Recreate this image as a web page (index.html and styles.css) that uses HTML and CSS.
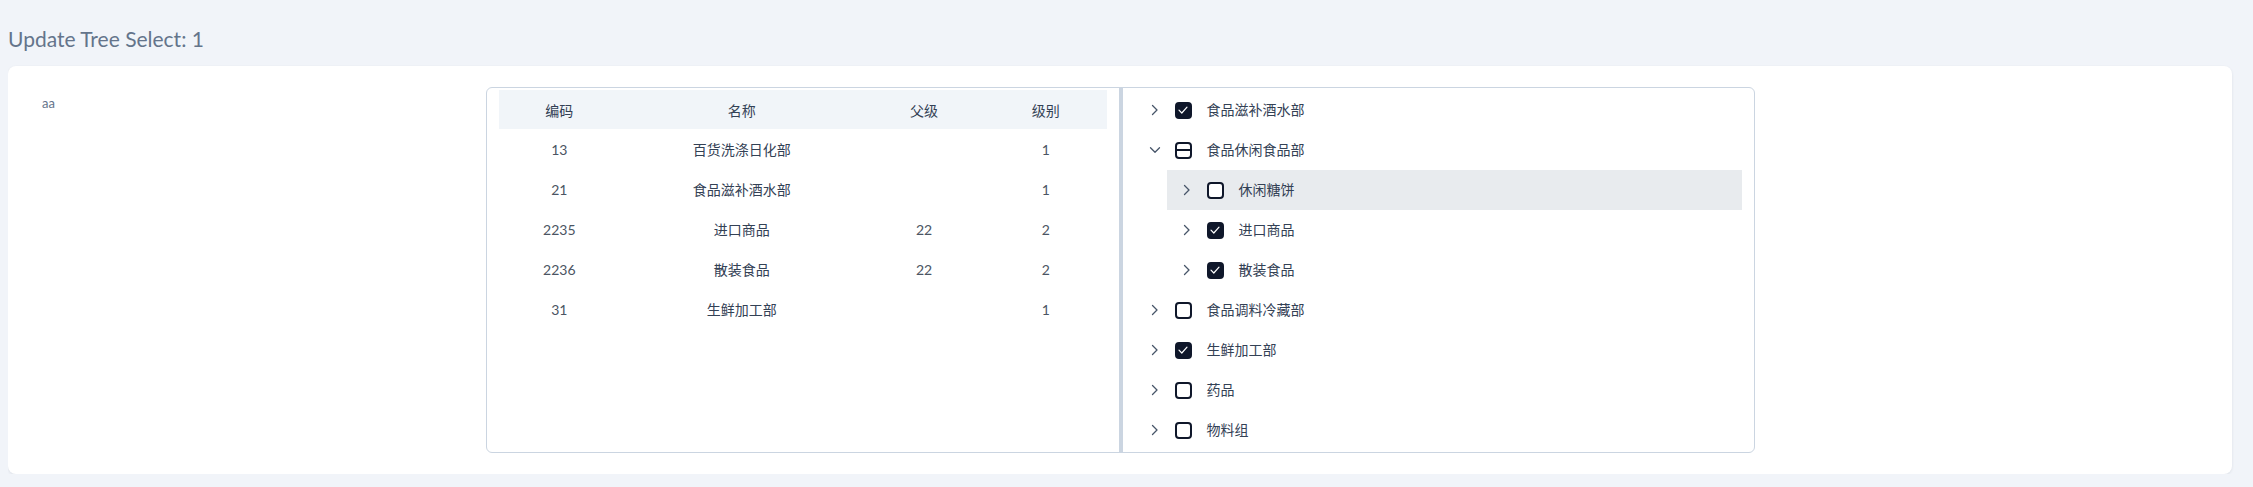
FILE: index.html
```html
<!DOCTYPE html>
<html lang="zh">
<head>
<meta charset="utf-8">
<title>Update Tree Select</title>
<link rel="stylesheet" href="styles.css">
</head>
<body>
<div class="page">
  <div class="title">Update Tree Select: 1</div>
  <div class="card">
    <div class="label">aa</div>
    <div class="box">
      <div class="pane-left">
        <table class="grid">
          <colgroup><col class="c1"><col class="c2"><col class="c3"><col class="c4"></colgroup>
          <thead>
            <tr><th>编码</th><th>名称</th><th>父级</th><th>级别</th></tr>
          </thead>
          <tbody>
            <tr><td>13</td><td class="name">百货洗涤日化部</td><td></td><td>1</td></tr>
            <tr><td>21</td><td class="name">食品滋补酒水部</td><td></td><td>1</td></tr>
            <tr><td>2235</td><td class="name">进口商品</td><td>22</td><td>2</td></tr>
            <tr><td>2236</td><td class="name">散装食品</td><td>22</td><td>2</td></tr>
            <tr><td>31</td><td class="name">生鲜加工部</td><td></td><td>1</td></tr>
          </tbody>
        </table>
      </div>
      <div class="divider"></div>
      <div class="pane-right">
        <div class="node">
          <svg class="chev" viewBox="0 0 16 16"><path d="M5.5 3.5 L10 8 L5.5 12.5"/></svg>
          <span class="cb checked"><svg viewBox="0 0 16 16"><path d="M4 8.2 L6.8 11 L12 5.2"/></svg></span>
          <span class="text">食品滋补酒水部</span>
        </div>
        <div class="node">
          <svg class="chev" viewBox="0 0 16 16"><path d="M3.5 5.8 L8 10.3 L12.5 5.8"/></svg>
          <span class="cb indeterminate"></span>
          <span class="text">食品休闲食品部</span>
        </div>
        <div class="children">
          <div class="node hover">
            <svg class="chev" viewBox="0 0 16 16"><path d="M5.5 3.5 L10 8 L5.5 12.5"/></svg>
            <span class="cb"></span>
            <span class="text">休闲糖饼</span>
          </div>
          <div class="node">
            <svg class="chev" viewBox="0 0 16 16"><path d="M5.5 3.5 L10 8 L5.5 12.5"/></svg>
            <span class="cb checked"><svg viewBox="0 0 16 16"><path d="M4 8.2 L6.8 11 L12 5.2"/></svg></span>
            <span class="text">进口商品</span>
          </div>
          <div class="node">
            <svg class="chev" viewBox="0 0 16 16"><path d="M5.5 3.5 L10 8 L5.5 12.5"/></svg>
            <span class="cb checked"><svg viewBox="0 0 16 16"><path d="M4 8.2 L6.8 11 L12 5.2"/></svg></span>
            <span class="text">散装食品</span>
          </div>
        </div>
        <div class="node">
          <svg class="chev" viewBox="0 0 16 16"><path d="M5.5 3.5 L10 8 L5.5 12.5"/></svg>
          <span class="cb"></span>
          <span class="text">食品调料冷藏部</span>
        </div>
        <div class="node">
          <svg class="chev" viewBox="0 0 16 16"><path d="M5.5 3.5 L10 8 L5.5 12.5"/></svg>
          <span class="cb checked"><svg viewBox="0 0 16 16"><path d="M4 8.2 L6.8 11 L12 5.2"/></svg></span>
          <span class="text">生鲜加工部</span>
        </div>
        <div class="node">
          <svg class="chev" viewBox="0 0 16 16"><path d="M5.5 3.5 L10 8 L5.5 12.5"/></svg>
          <span class="cb"></span>
          <span class="text">药品</span>
        </div>
        <div class="node">
          <svg class="chev" viewBox="0 0 16 16"><path d="M5.5 3.5 L10 8 L5.5 12.5"/></svg>
          <span class="cb"></span>
          <span class="text">物料组</span>
        </div>
      </div>
    </div>
    <div></div>
  </div>
</div>
</body>
</html>
```

FILE: styles.css
```css
html, body {
  background: #f1f4f9;
}
body {
  margin: 8px;
  font-family: "Lato", "Noto Sans CJK SC", sans-serif;
  color: #334155;
}
.page {
  padding-right: 13px;
}
.title {
  font-size: 21px;
  line-height: 28px;
  color: #64748b;
  padding-top: 17px;
  margin-bottom: 13px;
}
.card {
  background: #ffffff;
  border-radius: 8px;
  box-shadow: 0 1px 3px rgba(15, 23, 42, 0.09);
  display: grid;
  grid-template-columns: 1fr 1269px 1fr;
  padding: 21px 0 21px;
}
.label {
  padding-left: 34px;
  padding-top: 7px;
  font-size: 13px;
  line-height: 18px;
  color: #64748b;
}
.box {
  border: 1px solid #cbd5e1;
  border-radius: 6px;
  display: flex;
  height: 364px;
}
.pane-left {
  width: 632px;
  padding: 2px 12px 0;
  box-sizing: border-box;
}
.grid {
  width: 100%;
  border-collapse: collapse;
  table-layout: fixed;
  font-size: 14px;
}
.grid col.c1, .grid col.c3, .grid col.c4 { width: 20%; }
.grid col.c2 { width: 40%; }
.grid th {
  background: #f1f5f9;
  font-weight: 400;
  color: #334155;
  height: 39px;
  padding: 0;
  text-align: center;
}
.grid td {
  height: 40px;
  padding: 0;
  text-align: center;
  color: #4b5563;
}
.grid td.name {
  color: #334155;
}
.divider {
  width: 4px;
  background: #cbd5e1;
  flex: none;
}
.pane-right {
  flex: 1;
  padding: 2px 12px 0;
}
.node {
  display: flex;
  align-items: center;
  height: 40px;
  padding-left: 12px;
  font-size: 14px;
  color: #334155;
}
.node.hover {
  background: #e8ebee;
}
.children {
  margin-left: 32px;
}
.chev {
  width: 16px;
  height: 16px;
  flex: none;
  fill: none;
  stroke: #475569;
  stroke-width: 1.3;
  stroke-linecap: round;
  stroke-linejoin: round;
}
.cb {
  width: 17px;
  height: 17px;
  box-sizing: border-box;
  border: 2px solid #0f172a;
  border-radius: 4px;
  margin-left: 12px;
  margin-right: 15px;
  flex: none;
  position: relative;
  background: #ffffff;
}
.cb.checked {
  background: #0f172a;
}
.cb svg {
  position: absolute;
  left: -1.5px;
  top: -1.5px;
  width: 16px;
  height: 16px;
  fill: none;
  stroke: #ffffff;
  stroke-width: 1.2;
  stroke-linecap: round;
  stroke-linejoin: round;
}
.cb.indeterminate::after {
  content: "";
  position: absolute;
  left: 0;
  right: 0;
  top: 5.5px;
  height: 2px;
  background: #0f172a;
}
.text {
  line-height: 20px;
}
```
